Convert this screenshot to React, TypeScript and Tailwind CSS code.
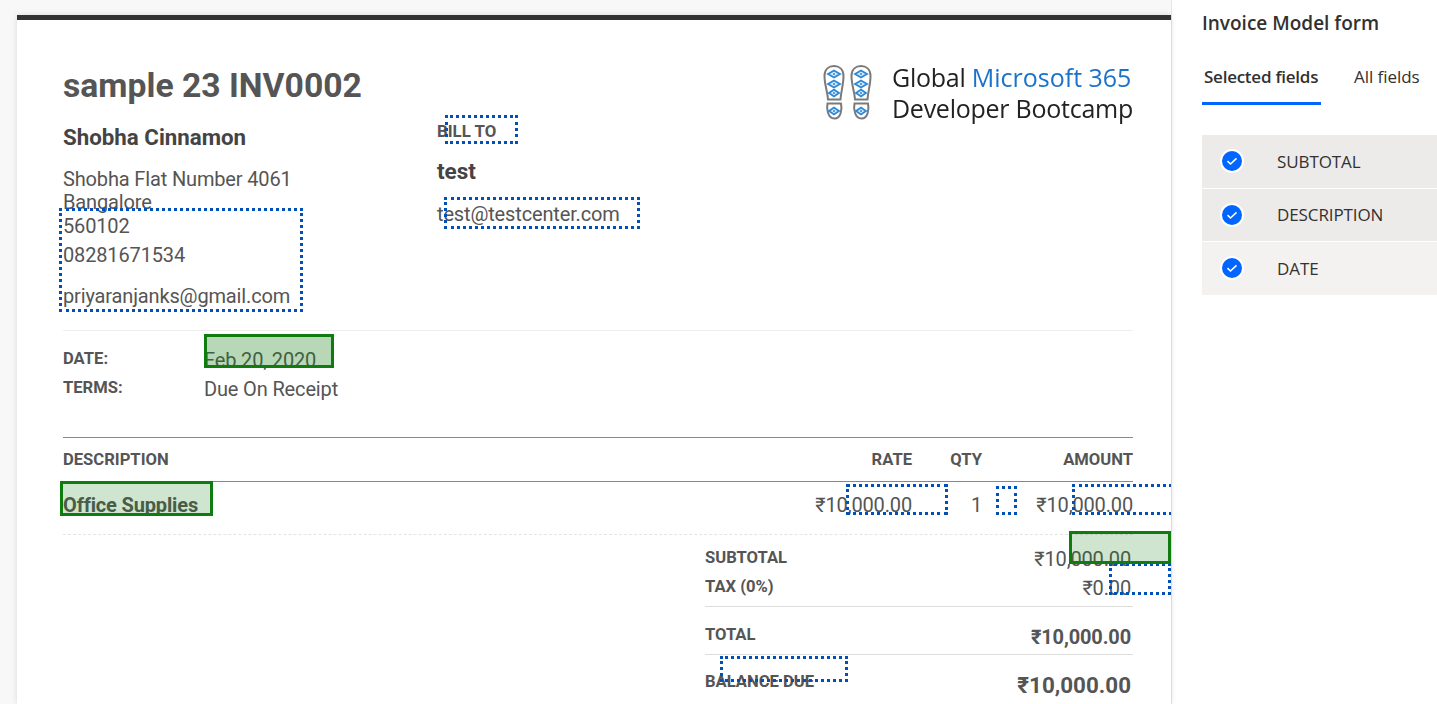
import { Fragment } from "react";

const fields = [
  { name: "SUBTOTAL", bg: "bg-[#edebe9]" },
  { name: "DESCRIPTION", bg: "bg-[#edebe9]" },
  { name: "DATE", bg: "bg-[#f3f2f1]" },
];

function CheckDot() {
  return (
    <svg width="24" height="24" viewBox="0 0 24 24" className="shrink-0">
      <circle cx="12" cy="12" r="11" fill="#0066ff" stroke="#fff" strokeWidth="2" />
      <path d="M7.5 12.2l3 2.8 6-5.6" fill="none" stroke="#fff" strokeWidth="1.6" />
    </svg>
  );
}

function Eye({ x, y, w = 12 }: { x: number; y: number; w?: number }) {
  return (
    <g transform={`translate(${x} ${y})`}>
      <path d={`M0 0l${w / 2} -3.5l${w / 2} 3.5l-${w / 2} 3.5z`} fill="#d6e8f8" stroke="#2b88d8" strokeWidth="1.8" />
      <circle cx={w / 2} cy="0" r="1" fill="#2b88d8" />
    </g>
  );
}

function Shoes() {
  const shoe = (dx: number) => (
    <g transform={`translate(${dx} 0)`} key={dx}>
      <path
        d="M11 1C16 1 20.500 4 20.500 11C20.500 20 18 26 17.500 34.500L5 34.500C4.500 26 1.500 20 1.500 11C1.500 4 6 1 11 1z"
        fill="#fff"
        stroke="#7a7a7a"
        strokeWidth="2"
      />
      <path
        d="M4.500 38.500L18 38.500C19 43 18.500 53.500 11.500 53.500C4.500 53.500 3.500 43 4.500 38.500z"
        fill="#fff"
        stroke="#7a7a7a"
        strokeWidth="2"
      />
      <Eye x={5} y={9} />
      <Eye x={5} y={19} />
      <Eye x={6} y={28} w={10} />
      <Eye x={6} y={46} w={10} />
    </g>
  );
  return (
    <svg width="52" height="56" viewBox="0 0 52 56" className="shrink-0">
      {shoe(0)}
      {shoe(27)}
    </svg>
  );
}

function Logo() {
  return (
    <div className="flex items-start gap-[17px] font-['Open_Sans',sans-serif] text-[25px] leading-[31px] font-medium tracking-[-0.25px] text-[#222] blur-[0.4px]">
      <Shoes />
      <div className="-mt-[3px] whitespace-nowrap">
        <div>
          Global <span className="tracking-[0px] text-[#1a73c8]">Microsoft 365</span>
        </div>
        <div>Developer Bootcamp</div>
      </div>
    </div>
  );
}

const label = "text-[16.6px] leading-[22px] font-bold tracking-normal text-[#555]";

export default function App() {
  return (
    <div className="flex h-[704px] overflow-hidden bg-[#f8f8f8] font-['Roboto',sans-serif]">
      {/* Document */}
      <div className="w-[1171px] shrink-0 pt-[15px] pl-[17px]">
        <div className="relative h-[689px] overflow-hidden bg-white shadow-[0_0_6px_rgba(0,0,0,0.12)]">
          <div className="h-[5px] bg-[#333]" />
          <div className="pl-[46px] pr-[38px] text-[20px] leading-[24px] tracking-[-0.15px] text-[#555]">
            {/* Header */}
            <div className="flex pt-[45px]">
              <div className="w-[374px] shrink-0">
                <h1 className="text-[33.7px] leading-[42px] font-bold tracking-normal">sample 23 INV0002</h1>
                <div className="mt-[16px] text-[22.3px] leading-[28px] font-bold tracking-normal text-[#444]">Shobha Cinnamon</div>
                <div className="mt-[16px]">Shobha Flat Number 4061</div>
                <div className="-mt-px">Bangalore</div>
                <div>560102</div>
                <div className="mt-[5px]">08281671534</div>
                <div className="mt-[17px]">priyaranjanks@gmail.com</div>
              </div>
              <div className="pt-[55px]">
                <div className="text-[16.8px] leading-[22px] font-bold tracking-normal">BILL TO</div>
                <div className="mt-[15px] text-[22.5px] leading-[28px] font-bold tracking-normal text-[#444]">test</div>
                <div className="mt-[17px]">test@testcenter.com</div>
              </div>
              <div className="flex flex-1 justify-end">
                <Logo />
              </div>
            </div>

            {/* Date and terms */}
            <div className="mt-[22px] border-t border-[#eeeeee] pt-[17px]">
              <div className="grid grid-cols-[141px_1fr] gap-y-[5px]">
                <div className={label}>DATE:</div>
                <div>Feb 20, 2020</div>
                <div className={label}>TERMS:</div>
                <div>Due On Receipt</div>
              </div>
            </div>

            {/* Items */}
            <div className="mt-[36px] grid h-[45px] grid-cols-[1fr_150px_70px_151px] items-center border-y border-[#888888]">
              <div className={label}>DESCRIPTION</div>
              <div className={`${label} text-right`}>RATE</div>
              <div className={`${label} text-right`}>QTY</div>
              <div className={`${label} text-right`}>AMOUNT</div>
            </div>
            <div className="grid grid-cols-[1fr_150px_70px_151px] border-b border-dashed border-[#e4e4e4] pt-[11px] pb-[17px]">
              <div className="font-bold">Office Supplies</div>
              <div className="text-right">₹10,000.00</div>
              <div className="text-right">1</div>
              <div className="text-right">₹10,000.00</div>
            </div>

            {/* Totals */}
            <div className="ml-[642px] text-right">
              <div className="mt-[12px] flex justify-between pr-[2px]">
                <span className={label}>SUBTOTAL</span>
                <span>₹10,000.00</span>
              </div>
              <div className="mt-[5px] flex justify-between pr-[2px]">
                <span className={label}>TAX (0%)</span>
                <span>₹0.00</span>
              </div>
              <div className="mt-[6px] flex justify-between border-t border-[#dddddd] pt-[18px] pr-[2px]">
                <span className="text-[16.6px] leading-[20px] font-bold tracking-normal text-[#555]">TOTAL</span>
                <span className="font-bold">₹10,000.00</span>
              </div>
              <div className="mt-[5px] flex justify-between border-t border-[#dddddd] pt-[16px] pr-[2px]">
                <span className={label}>BALANCE DUE</span>
                <span className="text-[22.4px] leading-[29px] font-bold tracking-normal">₹10,000.00</span>
              </div>
            </div>
          </div>

          {/* Detected field overlays */}
          <Fragment>
            <div className="absolute left-[428px] top-[100px] h-[29px] w-[73px] border-[3px] border-dotted border-[#0050b8]" />
            <div className="absolute left-[42px] top-[193px] h-[104px] w-[244px] border-[3px] border-dotted border-[#0050b8]" />
            <div className="absolute left-[427px] top-[182px] h-[32px] w-[196px] border-[3px] border-dotted border-[#0050b8]" />
            <div className="absolute left-[829px] top-[469px] h-[31px] w-[102px] border-[3px] border-dotted border-[#0050b8]" />
            <div className="absolute left-[979px] top-[471px] h-[29px] w-[21px] border-[3px] border-dotted border-[#0050b8]" />
            <div className="absolute left-[1055px] top-[469px] h-[31px] w-[112px] border-[3px] border-dotted border-[#0050b8]" />
            <div className="absolute left-[1092px] top-[548px] h-[32px] w-[62px] border-[3px] border-dotted border-[#0050b8]" />
            <div className="absolute left-[703px] top-[641px] h-[26px] w-[128px] border-[3px] border-dotted border-[#0050b8]" />
            <div className="absolute left-[187px] top-[319px] h-[34px] w-[130px] border-[3px] border-[#107c10] bg-[#107c10]/30" />
            <div className="absolute left-[43px] top-[466px] h-[35px] w-[153px] border-[3px] border-[#107c10] bg-[#107c10]/20" />
            <div className="absolute left-[1052px] top-[516px] h-[33px] w-[102px] border-[3px] border-[#107c10] bg-[#107c10]/20" />
          </Fragment>
        </div>
      </div>

      {/* Right panel */}
      <aside className="flex-1 border-l border-[#e6e6e6] bg-white pl-[30px] font-['Open_Sans',sans-serif] text-[#323130]">
        <h2 className="pt-[11px] text-[19px] leading-[24px] font-semibold">Invoice Model form</h2>
        <div className="mt-[30px] flex gap-[33px]">
          <div className="w-[119px] border-b-[3px] border-[#0066ff] pb-[13px] pl-[2px] text-[17px] leading-[24px] font-semibold tracking-[-0.25px] whitespace-nowrap">
            Selected fields
          </div>
          <div className="text-[17px] leading-[24px] tracking-[-0.05px] whitespace-nowrap">All fields</div>
        </div>
        <div className="mt-[30px] flex flex-col gap-px">
          {fields.map((f) => (
            <div key={f.name} className={`flex h-[52.500px] items-center pl-[18px] ${f.bg}`}>
              <CheckDot />
              <span className="ml-[33px] text-[17px] tracking-[-0.1px]">{f.name}</span>
            </div>
          ))}
        </div>
      </aside>
    </div>
  );
}
